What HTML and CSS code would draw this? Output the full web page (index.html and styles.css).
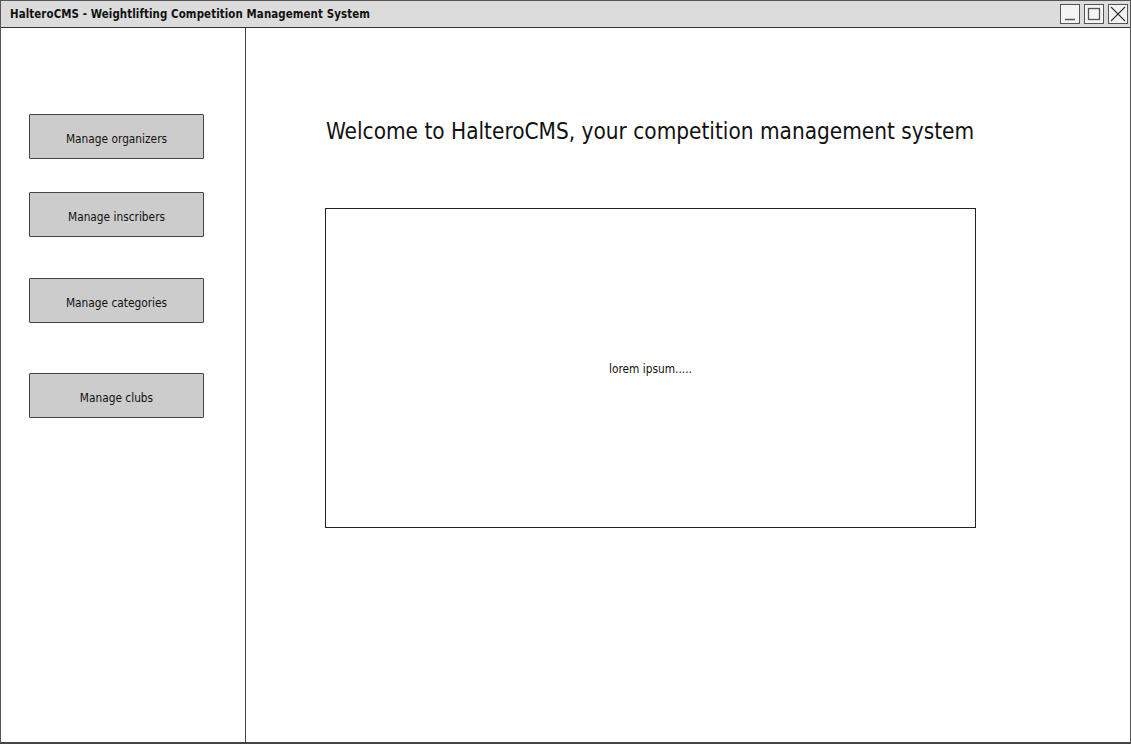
FILE: index.html
```html
<!DOCTYPE html>
<html>
<head>
<meta charset="utf-8">
<link rel="stylesheet" href="styles.css">
<title>HalteroCMS</title>
</head>
<body>
<div class="window">
  <div class="titlebar">
    <span class="title">HalteroCMS - Weightlifting Competition Management System</span>
    <div class="controls">
      <span class="ctl"><svg width="20" height="20" viewBox="0 0 20 20"><line x1="5" y1="15.5" x2="15" y2="15.5" stroke="#555" stroke-width="1.5"/></svg></span>
      <span class="ctl"><svg width="20" height="20" viewBox="0 0 20 20"><rect x="4.5" y="4.5" width="11" height="11" fill="none" stroke="#555" stroke-width="1.3"/></svg></span>
      <span class="ctl"><svg width="20" height="20" viewBox="0 0 20 20"><line x1="3" y1="3" x2="17" y2="17" stroke="#333" stroke-width="1.1"/><line x1="17" y1="3" x2="3" y2="17" stroke="#333" stroke-width="1.1"/></svg></span>
    </div>
  </div>
  <div class="main">
    <nav class="sidebar">
      <button class="nav-btn b1">Manage organizers</button>
      <button class="nav-btn b2">Manage inscribers</button>
      <button class="nav-btn b3">Manage categories</button>
      <button class="nav-btn b4">Manage clubs</button>
    </nav>
    <section class="content">
      <h1 class="welcome">Welcome to HalteroCMS, your competition management system</h1>
      <div class="panel">lorem ipsum.....</div>
    </section>
  </div>
</div>
</body>
</html>
```

FILE: styles.css
```css
html, body {
  margin: 0;
  padding: 0;
  background: #fff;
}
body {
  font-family: "DejaVu Sans", "Liberation Sans", sans-serif;
  color: #111;
}
.window {
  width: 1131px;
  height: 744px;
  box-sizing: border-box;
  border: 1px solid #555;
  border-bottom: 2px solid #444;
  display: flex;
  flex-direction: column;
}
.titlebar {
  height: 26px;
  background: #dcdcdc;
  border-bottom: 1px solid #333;
  display: flex;
  align-items: center;
  justify-content: space-between;
  padding: 0 2px 0 9px;
  flex: none;
}
.title {
  font-family: "DejaVu Sans Condensed", "DejaVu Sans", sans-serif;
  font-weight: bold;
  font-size: 11.4px;
  letter-spacing: 0.1px;
  color: #111;
}
.controls {
  display: flex;
  gap: 4px;
}
.ctl {
  width: 20px;
  height: 20px;
  box-sizing: border-box;
  border: 1px solid #555;
  background: #f4f4f4;
  display: flex;
}
.ctl svg { display: block; margin: -1px; }
.main {
  flex: 1;
  display: flex;
}
.sidebar {
  flex: none;
  border-right: 1px solid #444;
  display: flex;
  flex-direction: column;
  align-items: flex-start;
  padding-left: 28px;
  box-sizing: border-box;
  width: 245px;
}
.nav-btn {
  width: 175px;
  height: 45px;
  background: #cccccc;
  border: 1px solid #444;
  border-radius: 1px;
  font-family: "DejaVu Sans Condensed", "DejaVu Sans", sans-serif;
  font-size: 11.8px;
  color: #111;
  padding: 4px 0 0 0;
  cursor: pointer;
}
.b1 { margin-top: 86px; }
.b2 { margin-top: 33px; }
.b3 { margin-top: 41px; }
.b4 { margin-top: 50px; }
.content {
  flex: 1;
  padding-left: 79px;
}
.welcome {
  font-family: "DejaVu Sans Condensed", "DejaVu Sans", sans-serif;
  font-weight: normal;
  font-size: 22.4px;
  margin: 88px 0 0 1px;
  line-height: 30px;
  color: #111;
}
.panel {
  margin-top: 62px;
  width: 651px;
  height: 320px;
  box-sizing: border-box;
  border: 1px solid #222;
  display: flex;
  align-items: center;
  justify-content: center;
  padding-top: 2px;
  font-family: "DejaVu Sans Condensed", "DejaVu Sans", sans-serif;
  font-size: 11.8px;
  color: #111;
}
```
